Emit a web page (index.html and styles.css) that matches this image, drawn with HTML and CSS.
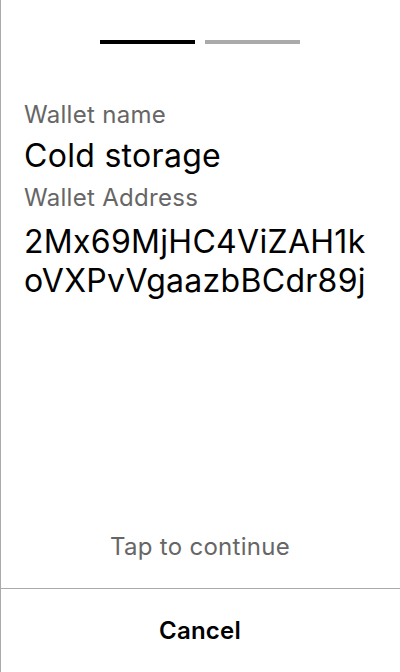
FILE: index.html
```html
<!DOCTYPE html>
<html lang="en">
<head>
<meta charset="utf-8">
<title>Wallet</title>
<link rel="stylesheet" href="styles.css">
</head>
<body>
<div class="screen">
  <div class="progress">
    <span class="bar bar-active"></span>
    <span class="bar"></span>
  </div>
  <div class="content">
    <div class="label">Wallet name</div>
    <div class="name">Cold storage</div>
    <div class="label label-second">Wallet Address</div>
    <div class="address">2Mx69MjHC4ViZAH1k<br>oVXPvVgaazbBCdr89j</div>
  </div>
  <div class="spacer"></div>
  <div class="tap">Tap to continue</div>
  <div class="actions">
    <button class="cancel" type="button">Cancel</button>
  </div>
</div>
</body>
</html>
```

FILE: styles.css
```css
* { box-sizing: border-box; }
html, body { margin: 0; padding: 0; background: #fff; }
body { font-family: Inter, "Noto Sans", sans-serif; color: #000; letter-spacing: 0.3px; }
.screen {
  height: 672px;
  display: flex;
  flex-direction: column;
  box-shadow: inset 1px 0 0 #aaa;
}
.progress {
  display: flex;
  justify-content: center;
  gap: 10px;
  padding-top: 40px;
}
.bar {
  display: block;
  width: 95px;
  height: 4px;
  background: #aaa;
}
.bar-active { background: #000; }
.content {
  padding: 56px 24px 0;
}
.label {
  font-size: 24px;
  line-height: 29px;
  color: #666;
}
.name {
  font-size: 32px;
  line-height: 39px;
  margin-top: 7px;
}
.label-second { margin-top: 8px; }
.address {
  font-size: 32px;
  line-height: 39px;
  margin-top: 10px;
}
.spacer { flex: 1; }
.tap {
  text-align: center;
  font-size: 24px;
  line-height: 29px;
  color: #666;
  margin-bottom: 27px;
}
.actions {
  border-top: 1px solid #aaa;
  height: 84px;
  display: flex;
}
.cancel {
  flex: 1;
  border: 0;
  background: none;
  font-family: inherit;
  font-size: 24px;
  font-weight: 600;
  letter-spacing: 0.2px;
  color: #000;
  padding: 0;
}
```
